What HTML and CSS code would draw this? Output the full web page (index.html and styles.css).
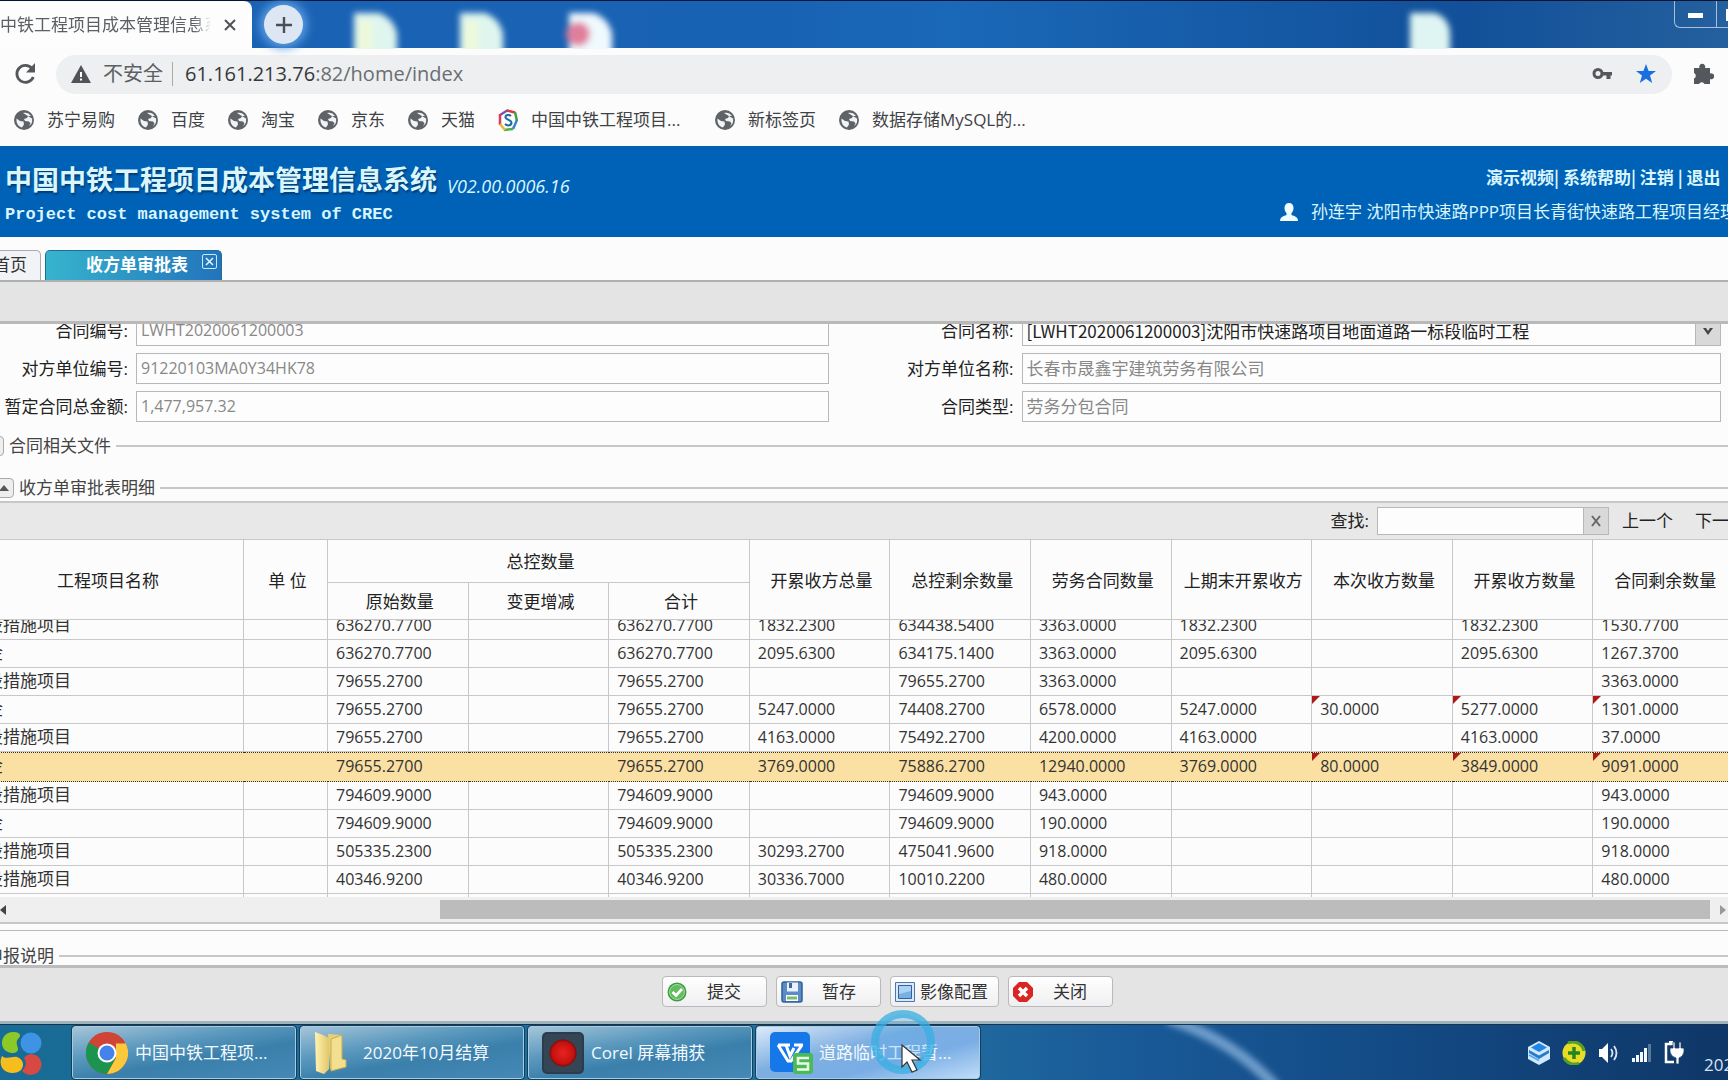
FILE: index.html
```html
<!DOCTYPE html>
<html lang="zh-CN">
<head>
<meta charset="utf-8">
<title>中国中铁工程项目成本管理信息系统</title>
<link rel="stylesheet" href="styles.css">
</head>
<body>
<svg class="defs" width="0" height="0" aria-hidden="true">
  <defs>
    <filter id="soft" x="-30%" y="-30%" width="160%" height="160%"><feGaussianBlur stdDeviation="3"/></filter>
    <radialGradient id="redball"><stop offset="0" stop-color="#e8231d"/><stop offset=".8" stop-color="#c4120f"/><stop offset="1" stop-color="#7c0d0c"/></radialGradient>
    <linearGradient id="paper" x1="0" x2="1"><stop offset="0" stop-color="#fff3b5"/><stop offset="1" stop-color="#e3c766"/></linearGradient>
    <symbol id="globe" viewBox="0 0 20 20">
      <circle cx="10" cy="10" r="10" fill="#5f6368"/>
      <path d="M2.500 8.500l3.500 2.500 3.500.5.500 3-2 3C4 16.500 2 13 2.500 8.500zM9 3c3-1 6 0 8 3l-3 0-1 2-3 1 1 2 4 .5 1.500 2-1.500 2.500c3-1.500 3.500-5 3-7.500" fill="#f1f3f4"/>
    </symbol>
  </defs>
</svg>
<div class="screen">
  <header class="tabstrip">
    <div class="browser-tab"><span class="browser-tab-title">中铁工程项目成本管理信息系</span>
      <button class="bare" aria-label="关闭标签页"><svg width="14" height="14" viewBox="0 0 14 14"><path d="M2 2l10 10M12 2L2 12" stroke="#4f5357" stroke-width="2"/></svg></button>
    </div>
    <button class="new-tab" aria-label="新标签页"><svg width="18" height="18" viewBox="0 0 18 18"><path d="M9 1v16M1 9h16" stroke="#4a4e52" stroke-width="2.400"/></svg></button>
    <svg class="desktop" width="1100" height="48" viewBox="0 0 1100 48" aria-hidden="true">
      <g filter="url(#soft)">
        <path d="M48 12h25q14 5 18 20v30H48z" fill="#dff6ef"/><path d="M52 20h14v30H52z" fill="#edf9d9"/>
        <path d="M154 12h25q14 5 18 20v30h-43z" fill="#dff6ef"/><path d="M158 20h14v30h-14z" fill="#edf9d9"/>
        <path d="M263 12h25q14 5 18 20v30h-43z" fill="#f0f9fe"/><circle cx="272" cy="33" r="12" fill="#e07f9c"/>
      </g>
    </svg>
    <svg class="desktop-far" width="60" height="48" viewBox="0 0 60 48" aria-hidden="true"><path d="M8 12h25q14 5 15 20v30H8z" fill="#dff5f3" filter="url(#soft)"/></svg>
    <div class="window-controls"><button aria-label="最小化"><i></i></button><button aria-label="最大化"><i></i></button></div>
  </header>

  <nav class="addressbar">
    <button class="bare" aria-label="重新加载"><svg width="22" height="24" viewBox="0 0 22 24"><path d="M18 6.500A8.500 8.500 0 1 0 19.300 15" fill="none" stroke="#54585c" stroke-width="2.800"/><path d="M21 1v9.500h-9z" fill="#54585c"/></svg></button>
    <div class="pill">
      <svg width="20" height="18" viewBox="0 0 20 18"><path d="M10 0l10 18H0z" fill="#505458"/><path d="M9 7h2v5H9zM9 13.500h2v2H9z" fill="#fff"/></svg>
      <span class="insecure">不安全</span>
      <span class="url"><b>61.161.213.76</b>:82/home/index</span>
      <span class="grow"></span>
      <svg width="20" height="14" viewBox="0 0 20 14"><circle cx="6" cy="6.500" r="4" fill="none" stroke="#54585c" stroke-width="3"/><path d="M10 5h10v3.500h-1.500V12h-4V8.500H10z" fill="#54585c"/></svg>
      <svg width="20" height="20" viewBox="0 0 20 20"><path d="M10 0l2.600 7H20l-6 4.600L16.200 19 10 14.700 3.800 19 6 11.600 0 7h7.400z" fill="#1a6fe0"/></svg>
    </div>
    <button class="bare" aria-label="扩展程序"><svg width="22" height="22" viewBox="0 0 22 22"><path d="M2 5h5.500a3 3 0 1 1 5.500 0h5v5.500a3 3 0 1 1 0 5.500v5h-5.500a3 3 0 0 0-5.500 0H2v-5.500a3 3 0 0 0 0-5.500z" fill="#54585c"/></svg></button>
  </nav>

  <nav class="bookmarks">
    <a href="#"><svg><use href="#globe"/></svg>苏宁易购</a>
    <a href="#"><svg><use href="#globe"/></svg>百度</a>
    <a href="#"><svg><use href="#globe"/></svg>淘宝</a>
    <a href="#"><svg><use href="#globe"/></svg>京东</a>
    <a href="#"><svg><use href="#globe"/></svg>天猫</a>
    <a href="#" class="wide"><svg viewBox="0 0 20 24"><g fill="none" stroke-width="2.500"><path d="M10 2L2 7" stroke="#7a55b0"/><path d="M9 2.500l8 2" stroke="#d93a3a"/><path d="M2 6v11" stroke="#e0385c"/><path d="M17 4l2 9" stroke="#43a048"/><path d="M19 12l-4 9" stroke="#3b82c9"/><path d="M15 21l-9 1" stroke="#4caf50"/><path d="M7 22l-5-6" stroke="#e9b930"/></g><path d="M13 8c-2-2-6-1-5.500 1.500S14 12 13.500 15 9 18 7 16" fill="none" stroke="#1d6b9c" stroke-width="2"/></svg>中国中铁工程项目...</a>
    <a href="#"><svg><use href="#globe"/></svg>新标签页</a>
    <a href="#"><svg><use href="#globe"/></svg>数据存储MySQL的...</a>
  </nav>

  <section class="banner">
    <div class="brand">
      <div class="brand-line"><h1>中国中铁工程项目成本管理信息系统</h1><em>V02.00.0006.16</em></div>
      <p>Project cost management system of CREC</p>
    </div>
    <div class="account">
      <div class="links"><a href="#">演示视频</a>| <a href="#">系统帮助</a>| <a href="#">注销</a> | <a href="#">退出</a></div>
      <div class="user"><svg width="18" height="18" viewBox="0 0 18 18"><path d="M9 0c3 0 4.500 2 4.500 5 0 2.500-1 4-2 5v2c3 1 6.500 2 6.500 6H0c0-4 3.500-5 6.500-6v-2c-1-1-2-2.500-2-5C4.500 2 6 0 9 0z" fill="#eefcff"/></svg><span>孙连宇 沈阳市快速路PPP项目长青街快速路工程项目经理部</span></div>
    </div>
  </section>

  <nav class="pagetabs">
    <a href="#" class="ptab home">首页</a>
    <a href="#" class="ptab active">收方单审批表</a>
    <button class="ptab-close" aria-label="关闭"><svg width="9" height="9" viewBox="0 0 9 9"><path d="M1 1l7 7M8 1L1 8" stroke="#dff6fb" stroke-width="1.500"/></svg></button>
  </nav>
  <div class="band"></div>

  <main class="content">
    <form class="fields">
      <label for="f1">合同编号:</label><input id="f1" readonly value="LWHT2020061200003">
      <label for="f2">合同名称:</label><div class="combo"><input id="f2" value="[LWHT2020061200003]沈阳市快速路项目地面道路一标段临时工程"><button type="button" aria-label="展开"><svg width="12" height="8" viewBox="0 0 12 8"><path d="M1 1h3l2 3 2-3h3L6 8z" fill="#444"/></svg></button></div>
      <label for="f3">对方单位编号:</label><input id="f3" readonly value="91220103MA0Y34HK78">
      <label for="f4">对方单位名称:</label><input id="f4" class="cjk" readonly value="长春市晟鑫宇建筑劳务有限公司">
      <label for="f5">暂定合同总金额:</label><input id="f5" readonly value="1,477,957.32">
      <label for="f6">合同类型:</label><input id="f6" class="cjk" readonly value="劳务分包合同">
    </form>
    <div class="group files"><button class="toggle" aria-label="展开"></button><span>合同相关文件</span><hr></div>
    <div class="group details"><button class="toggle" aria-label="收起"><svg width="10" height="6" viewBox="0 0 10 6"><path d="M5 0l5 6H0z" fill="#555"/></svg></button><span>收方单审批表明细</span><hr></div>
    <div class="gridpanel">
      <div class="gridbar">
        <label for="q">查找:</label>
        <div class="search"><input id="q" type="text"><button aria-label="清除"><svg width="10" height="12" viewBox="0 0 10 12"><path d="M1 1l8 10M9 1L1 11" stroke="#666" stroke-width="2"/></svg></button></div>
        <button class="bare find">上一个</button><button class="bare find next">下一个</button>
      </div>
      <table class="head">
        <colgroup><col class="c-name"><col class="c-unit"><col span="10"></colgroup>
        <thead>
        <tr class="h1"><th rowspan="2">工程项目名称</th><th rowspan="2">单 位</th><th colspan="3">总控数量</th><th rowspan="2">开累收方总量</th><th rowspan="2">总控剩余数量</th><th rowspan="2">劳务合同数量</th><th rowspan="2">上期末开累收方</th><th rowspan="2">本次收方数量</th><th rowspan="2">开累收方数量</th><th rowspan="2">合同剩余数量</th></tr>
        <tr class="h2"><th>原始数量</th><th>变更增减</th><th>合计</th></tr>
        </thead>
      </table>
      <div class="viewport">
      <table class="rows">
        <colgroup><col class="c-name"><col class="c-unit"><col span="10"></colgroup>
        <tbody>
        <tr><td>设措施项目</td><td></td><td>636270.7700</td><td></td><td>636270.7700</td><td>1832.2300</td><td>634438.5400</td><td>3363.0000</td><td>1832.2300</td><td></td><td>1832.2300</td><td>1530.7700</td></tr>
        <tr><td>金</td><td></td><td>636270.7700</td><td></td><td>636270.7700</td><td>2095.6300</td><td>634175.1400</td><td>3363.0000</td><td>2095.6300</td><td></td><td>2095.6300</td><td>1267.3700</td></tr>
        <tr><td>设措施项目</td><td></td><td>79655.2700</td><td></td><td>79655.2700</td><td></td><td>79655.2700</td><td>3363.0000</td><td></td><td></td><td></td><td>3363.0000</td></tr>
        <tr><td>金</td><td></td><td>79655.2700</td><td></td><td>79655.2700</td><td>5247.0000</td><td>74408.2700</td><td>6578.0000</td><td>5247.0000</td><td class="dirty">30.0000</td><td class="dirty">5277.0000</td><td class="dirty">1301.0000</td></tr>
        <tr><td>设措施项目</td><td></td><td>79655.2700</td><td></td><td>79655.2700</td><td>4163.0000</td><td>75492.2700</td><td>4200.0000</td><td>4163.0000</td><td></td><td>4163.0000</td><td>37.0000</td></tr>
        <tr class="selected"><td>金</td><td></td><td>79655.2700</td><td></td><td>79655.2700</td><td>3769.0000</td><td>75886.2700</td><td>12940.0000</td><td>3769.0000</td><td class="dirty">80.0000</td><td class="dirty">3849.0000</td><td class="dirty">9091.0000</td></tr>
        <tr><td>设措施项目</td><td></td><td>794609.9000</td><td></td><td>794609.9000</td><td></td><td>794609.9000</td><td>943.0000</td><td></td><td></td><td></td><td>943.0000</td></tr>
        <tr><td>金</td><td></td><td>794609.9000</td><td></td><td>794609.9000</td><td></td><td>794609.9000</td><td>190.0000</td><td></td><td></td><td></td><td>190.0000</td></tr>
        <tr><td>设措施项目</td><td></td><td>505335.2300</td><td></td><td>505335.2300</td><td>30293.2700</td><td>475041.9600</td><td>918.0000</td><td></td><td></td><td></td><td>918.0000</td></tr>
        <tr><td>设措施项目</td><td></td><td>40346.9200</td><td></td><td>40346.9200</td><td>30336.7000</td><td>10010.2200</td><td>480.0000</td><td></td><td></td><td></td><td>480.0000</td></tr>
        <tr><td></td><td></td><td></td><td></td><td></td><td></td><td></td><td></td><td></td><td></td><td></td><td></td></tr>
        </tbody>
      </table>
      </div>
      <div class="scrollbar">
        <svg width="6" height="10" viewBox="0 0 6 10"><path d="M6 0v10L0 5z" fill="#444"/></svg>
        <div class="thumb"></div>
        <svg width="6" height="10" viewBox="0 0 6 10"><path d="M0 0v10l6-5z" fill="#999"/></svg>
      </div>
    </div>
    <div class="group note"><span>申报说明</span><hr></div>
  </main>

  <footer class="actions">
    <button><svg width="20" height="20" viewBox="0 0 20 20"><circle cx="10" cy="10" r="9.500" fill="#3f9c46"/><circle cx="10" cy="10" r="7.500" fill="#63bd5c" stroke="#a5dc9a"/><path d="M5.500 10l3.500 3.500L15 7" stroke="#fff" stroke-width="2.600" fill="none"/></svg><span>提交</span></button>
    <button><svg width="22" height="22" viewBox="0 0 22 22"><rect x="1" y="1" width="20" height="20" rx="2" fill="#5c8cc6" stroke="#2f5f9c" stroke-width="1.500"/><path d="M6 1.500h11v9H6z" fill="#e9f2fb"/><path d="M8 2h3v5H8z" fill="#3b68a4"/><path d="M5 14h12v6H5z" fill="#fff"/><path d="M6 15.500h10v3H6z" fill="#7cba69"/></svg><span>暂存</span></button>
    <button class="image"><svg width="20" height="20" viewBox="0 0 20 20"><path d="M.500.500h19v19H.500z" fill="#dce9f7" stroke="#4a77b0"/><path d="M3.500 3.500h13v13h-13z" fill="#79b0e4" stroke="#35609b"/><path d="M4 4h12v5l-12 3z" fill="#a9d2f4"/></svg><span>影像配置</span></button>
    <button><svg width="20" height="20" viewBox="0 0 20 20"><path d="M6 0h8l6 6v8l-6 6H6l-6-6V6z" fill="#da2622"/><path d="M6 6l8 8M14 6l-8 8" stroke="#fff" stroke-width="3.500"/></svg><span>关闭</span></button>
  </footer>

  <footer class="taskbar">
    <svg class="swoosh" width="140" height="55" viewBox="0 0 140 55" aria-hidden="true"><path d="M8-6Q72 14 116 62" stroke="#9dc3ea" stroke-opacity=".65" stroke-width="11" fill="none" filter="url(#soft)"/></svg>
    <button class="start bare" aria-label="开始"><svg width="44" height="44" viewBox="0 0 44 44"><path d="M13 1c7 0 9 3 5 7-3 4 0 7 0 10 0 4-6 5-10 3C-2 17 1 1 13 1z" fill="#8cc926"/><circle cx="31" cy="12" r="10.500" fill="#3f93e4"/><path d="M32 23a11 10.500 0 1 1-10 17c4-4 5-8 2-13 2-3 5-4 8-4z" fill="#d64a43"/><path d="M2 25c4 4 11 0 15 1 6 2 8 8 4 13-4 4-14 4-18-1-3-4-3-9-1-13z" fill="#f6bd1c"/></svg></button>
    <div class="tasks">
      <button><svg width="42" height="42" viewBox="0 0 42 42"><circle cx="21" cy="21" r="21" fill="#d04436"/><path d="M2.800 10.500A21 21 0 0 0 21 42l9-16-9-5z" fill="#1d9350"/><path d="M39.200 10.500A21 21 0 0 1 21 42l9-16V11z" fill="#fcc93c"/><path d="M2.800 10.500A21 21 0 0 1 39.500 11.500H21z" fill="#d04436"/><circle cx="21" cy="21" r="9.500" fill="#fff"/><circle cx="21" cy="21" r="7.500" fill="#4483ec"/></svg><span>中国中铁工程项...</span></button>
      <button class="folder"><svg width="34" height="44" viewBox="0 0 34 44"><path d="M14 3l14 1v28l-12 6z" fill="#e7cf7b"/><path d="M1 1l8 3 6 3v31l-5 5-8-3z" fill="url(#paper)"/><path d="M17 8l11-4v24l4 1v7l-15 4z" fill="#f3df90" stroke="#c9ab50"/></svg><span>2020年10月结算</span></button>
      <button><svg width="42" height="42" viewBox="0 0 42 42"><rect width="42" height="42" rx="5" fill="#2c3c4a"/><rect x="2" y="2" width="38" height="38" rx="4" fill="#344655"/><circle cx="21" cy="21" r="13.500" fill="url(#redball)"/></svg><span>Corel 屏幕捕获</span></button>
      <button class="current"><svg width="44" height="42" viewBox="0 0 44 42"><rect width="40" height="40" rx="5" fill="#1577e8"/><path d="M8 13h8l4 11 4-8M13 13h7M32 13L21 29h-3L8 13M24 13h9" fill="none" stroke="#fff" stroke-width="3"/><rect x="23" y="21" width="20" height="21" rx="3" fill="#4bb956"/><path d="M39 26H28v5.500h10v6H27" fill="none" stroke="#e9fbe5" stroke-width="2.600"/></svg><span>道路临时工程暂...</span></button>
    </div>
    <div class="tray">
      <svg width="22" height="24" viewBox="0 0 22 24"><path d="M11 0l11 6v12l-11 6L0 18V6z" fill="#cfe9ff"/><path d="M11 2l8 4.500-8 4.500-8-4.500z" fill="#2185e4"/><path d="M1 9l10 5.500L21 9v3l-10 6-10-6z" fill="#2a78c8"/><path d="M1 14l10 5.500" stroke="#4fa9f2" stroke-width="1.500"/></svg>
      <svg width="24" height="24" viewBox="0 0 24 24"><circle cx="12" cy="12" r="11.500" fill="#e8dc26"/><path d="M6 2a11.500 11.500 0 0 1 16 8M2 17a11.500 11.500 0 0 0 15 5" stroke="#559e28" stroke-width="3" fill="none"/><path d="M12 6v12M6 12h12" stroke="#25861f" stroke-width="3.500"/></svg>
      <svg width="22" height="22" viewBox="0 0 22 22"><path d="M1 7h3l6-6v20l-6-6H1z" fill="#fff"/><path d="M13 7q3 4 0 8M16 4q5 7 0 14" stroke="#d9e8f6" stroke-width="1.800" fill="none"/></svg>
      <svg width="20" height="20" viewBox="0 0 20 20"><path d="M0 15h3v4H0zM4 12h3v7H4zM8 9h3v10H8zM12 5h3v14h-3z" fill="#f4f9ff"/><path d="M16 1h3v18h-3z" fill="#57789d"/></svg>
      <svg width="20" height="24" viewBox="0 0 20 24"><path d="M9 3H2v18h8M5 1h4" fill="none" stroke="#fff" stroke-width="2.500"/><path d="M9 1h2v6h4V1h2v6h3v4q-1 5-5 6v6h-3v-6q-5-1-6-6V7h3z" fill="#fff" stroke="#1d3d66" stroke-width=".8"/></svg>
      <time>2020</time>
    </div>
    <svg class="pointer" width="68" height="72" viewBox="0 0 68 72" aria-hidden="true"><circle cx="33" cy="34" r="28" fill="#4ba9e6" fill-opacity=".25" stroke="#38afe2" stroke-opacity=".75" stroke-width="8"/><path d="M32 37v22l5-5 5 10 5-2-5-10h8z" fill="#fff" stroke="#333" stroke-width="1.200"/></svg>
  </footer>
</div>
</body>
</html>
```

FILE: styles.css
```css
* { box-sizing: border-box; }
body {
  margin: 0;
  overflow: hidden;
  background: #fcfcfc;
  color: #333;
  font: 17px/24px "Open Sans", "Noto Sans CJK SC", sans-serif;
}
button, input { font: inherit; color: inherit; margin: 0; }
button { cursor: pointer; padding: 0; }
a { color: inherit; text-decoration: none; }
svg { flex: none; display: block; }
.defs { position: absolute; }
.bare { border: 0; background: none; flex: none; }
.grow { flex: 1; }
.screen { display: flex; flex-direction: column; height: 100vh; overflow: hidden; white-space: nowrap; }
.screen > * { flex: none; }

/* browser window */
.tabstrip {
  position: relative;
  display: flex;
  align-items: center;
  gap: 12px;
  height: 48px;
  border-top: 1px solid #061534;
  background: linear-gradient(90deg, #1c62b4 0%, #1862b4 45%, #1a68b8 55%, #125099 85%, #24609e 100%);
}
.browser-tab {
  display: flex;
  align-items: center;
  gap: 12px;
  width: 252px;
  height: 100%;
  border-radius: 0 8px 0 0;
  background: #fdfdfd;
  color: #5c6064;
}
.browser-tab-title {
  width: 211px;
  overflow: hidden;
  -webkit-mask-image: linear-gradient(90deg, #000 92%, transparent);
  mask-image: linear-gradient(90deg, #000 92%, transparent);
}
.new-tab {
  display: grid;
  place-items: center;
  width: 39px;
  height: 39px;
  border: 0;
  border-radius: 50%;
  background: #dce7f3;
  box-shadow: 0 0 10px 4px #5b9ee4;
}
.desktop { position: absolute; left: 306px; top: 0; }
.desktop-far { position: absolute; right: 266px; top: 0; }
.window-controls {
  display: flex;
  align-self: flex-start;
  width: 54px;
  height: 27px;
  margin-left: auto;
  overflow: hidden;
  border: 1px solid #a6c0dc;
  border-width: 0 0 1px 1px;
  border-radius: 0 0 0 6px;
}
.window-controls button { flex: 0 0 42px; border: 0; border-right: 1px solid #a6c0dc; background: none; }
.window-controls i { display: block; width: 15px; height: 5px; margin: 2px auto 0; background: #fff; }
.window-controls button + button i { height: 12px; margin-left: 9px; }
.addressbar { display: flex; align-items: center; gap: 20px; height: 52px; padding: 0 14px; }
.pill {
  display: flex;
  align-items: center;
  flex: 1;
  height: 39px;
  gap: 12px;
  padding: 0 16px 0 15px;
  border-radius: 20px;
  background: #eeeff1;
  font-size: 20px;
}
.pill svg:last-child { margin-left: 12px; }
.insecure { padding-right: 9px; border-right: 1px solid #aaa; color: #5c6064; }
.url { color: #6a6e72; }
.url b { font-weight: 400; color: #35383b; }
.bookmarks { display: flex; align-items: center; gap: 23px; height: 46px; padding: 0 14px 7px; }
.bookmarks a { display: flex; align-items: center; gap: 13px; color: #404346; }
.bookmarks a.wide { width: 194px; }
.bookmarks svg { width: 20px; height: 20px; }
.bookmarks .wide svg { height: 24px; }

/* application banner */
.banner {
  display: flex;
  justify-content: space-between;
  height: 91px;
  background: #0062b6;
  color: #d9f6ff;
}
.brand { padding: 16px 0 0 5px; }
.brand-line { display: flex; align-items: flex-end; gap: 10px; }
.brand h1 { margin: 0; font-size: 27px; line-height: 36px; font-weight: 700; text-shadow: 1px 2px 2px #013b73; }
.brand em { font-size: 18px; }
.brand p { margin: 4px 0 0; font: 700 17px/26px "Liberation Mono", monospace; }
.account { display: flex; flex-direction: column; gap: 11px; width: 448px; padding-top: 19px; overflow: hidden; }
.links { padding-left: 206px; font: 700 17px/24px "Noto Sans CJK SC", sans-serif; }
.user { display: flex; align-items: center; gap: 13px; }

/* page tabs */
.pagetabs { position: relative; display: flex; align-items: flex-end; height: 45px; gap: 4px; border-bottom: 2px solid #aeb0b0; }
.ptab { height: 30px; border: 1px solid #aaa; border-bottom: 0; border-radius: 0 5px 0 0; background: #f2f3f6; line-height: 28px; }
.ptab.home { width: 61px; margin-left: -20px; padding-left: 12px; }
.ptab.active {
  width: 177px;
  padding-left: 40px;
  border-color: #1d6d95;
  border-radius: 5px 5px 0 0;
  background: linear-gradient(90deg, #37b4cd, #2273bc);
  color: #fff;
  font-weight: 700;
}
.ptab-close {
  display: grid;
  place-items: center;
  position: absolute;
  left: 202px;
  top: 17px;
  width: 15px;
  height: 15px;
  border: 1px solid #c9ecf4;
  border-radius: 2px;
  background: none;
}
.band { height: 42px; border-bottom: 3px solid #b9b9b9; background: #e4e4e4; }

/* form */
.content { overflow: hidden; height: 641px; }
.fields {
  display: grid;
  grid-template-columns: 128px 99fr 177px 100fr;
  grid-auto-rows: 31px;
  gap: 7px 8px;
  margin-top: -9px;
  padding-right: 7px;
  line-height: 31px;
}
.fields label { text-align: right; color: #222; }
.fields input { width: 100%; min-width: 0; height: 31px; padding: 0 4px; border: 1px solid #b7b8bc; background: #fdfdfd; color: #888; font-size: 16px; }
.fields input.cjk { font-size: 17px; }
.combo { display: flex; }
.fields .combo input { flex: 1; color: #222; font: 17px "Noto Sans CJK SC", sans-serif; }
.combo button, .search button { display: grid; place-items: center; width: 25px; border: 1px solid #b7b8bc; border-left: 0; background: #d9d9d9; }
.group { display: flex; align-items: center; gap: 5px; height: 20px; color: #444; }
.group hr { flex: 1; margin: 0; border: 0; border-top: 2px solid #c6c7c7; }
.toggle { display: grid; place-items: center; width: 20px; height: 20px; border: 1px solid #aaa; border-radius: 4px; background: #eee; }
.files { margin-top: 14px; }
.files .toggle { margin-left: -16px; }
.details { margin-top: 22px; }
.details .toggle { margin-left: -6px; }
.note { margin-top: 22px; }
.note span { margin-left: -14px; }

/* detail grid */
.gridpanel {
  margin-top: 3px;
  overflow: hidden;
  border-top: 2px solid #c6c7c7;
  border-bottom: 2px solid #c6c7c7;
  box-shadow: 0 6px 0 #fcfcfc, 0 7px 0 #b9b9b9;
}
.gridbar { display: flex; align-items: center; justify-content: flex-end; height: 36px; background: #e8e8e8; color: #222; }
.search { display: flex; width: 232px; height: 28px; margin: 0 13px 0 8px; }
.search input { flex: 1; min-width: 0; border: 1px solid #b7b8bc; background: #fdfdfd; }
.find.next { width: 33px; margin-left: 22px; overflow: hidden; text-align: left; }
table { width: calc(100% + 37px); margin-left: -31px; table-layout: fixed; border-collapse: separate; border-spacing: 0; }
.c-name { width: 275px; }
.c-unit { width: 84px; }
th { padding: 2px 0 0 4px; border: 1px solid #c8c8c8; border-width: 0 1px 1px 0; font-weight: 400; color: #222; }
.head { border-top: 1px solid #c8c8c8; }
.h1 { height: 43px; }
.h2 { height: 37px; }
.viewport { height: 277px; overflow: hidden; }
.rows { margin-top: -8px; }
.rows tr { height: 28px; }
td { position: relative; height: 28px; padding: 0 0 2px 8px; border: 1px solid #c8c8c8; border-width: 0 1px 1px 0; font-size: 16px; line-height: 24px; color: #333; }
td:first-child { padding-left: 17px; font-size: 17px; }
.selected td { height: 30px; border: 1px dotted #333; border-width: 1px 0; background: #fae0a2; padding-right: 1px; }
.dirty::before {
  content: "";
  position: absolute;
  left: 0;
  top: 0;
  border: 4px solid;
  border-color: #b01818 transparent transparent #b01818;
}
.scrollbar { display: flex; align-items: center; justify-content: space-between; height: 25px; padding-right: 2px; background: #efefef; }
.thumb { width: 73.6%; height: 19px; margin: 0 10px 0 auto; background: #bcbcbc; }

/* actions */
.actions {
  flex: 1 0 auto;
  display: flex;
  justify-content: center;
  align-items: flex-start;
  gap: 9px;
  padding: 8px 0 0 46px;
  border-top: 3px solid #bcbcbc;
  border-bottom: 3px solid #9fb4bd;
  background: #e4e4e4;
}
.actions button { display: flex; align-items: center; width: 105px; height: 31px; padding: 0 4px; border: 1px solid #b9b9bd; border-radius: 4px; background: linear-gradient(#fff, #efeff1); }
.actions span { flex: 1; text-align: center; }
.actions .image { width: 109px; }

/* taskbar */
.taskbar {
  position: relative;
  display: flex;
  align-items: center;
  height: 56px;
  border-top: 1px solid #17334f;
  background: linear-gradient(90deg, #176b94 0%, #2472a2 50%, #195a98 65%, #134b86 80%, #0f3767 100%);
}
.start { width: 72px; }
.tasks { display: flex; gap: 4px; }
.tasks button {
  display: flex;
  align-items: center;
  gap: 7px;
  width: 224px;
  height: 53px;
  padding: 0 13px;
  border: 1px solid #a8cbe0;
  border-radius: 3px;
  outline: 1px solid #123f5c;
  background: linear-gradient(170deg, #a5c5d9 0%, #5c99be 35%, #3a80ab 60%, #4688b6 100%);
  color: #f2faff;
}
.tasks .folder { gap: 15px; }
.tasks .current { background: linear-gradient(165deg, #dceafa 0%, #7eafe1 40%, #79ade5 65%, #c0dcf8 100%); gap: 5px; }
.swoosh { position: absolute; left: 1160px; top: 0; }
.tray { display: flex; align-items: center; gap: 12px; margin-left: auto; }
.tray time { width: 24px; overflow: hidden; margin: 24px 0 0 8px; color: #d5e5f5; }
.pointer { position: absolute; left: 870px; bottom: 0; }
```
